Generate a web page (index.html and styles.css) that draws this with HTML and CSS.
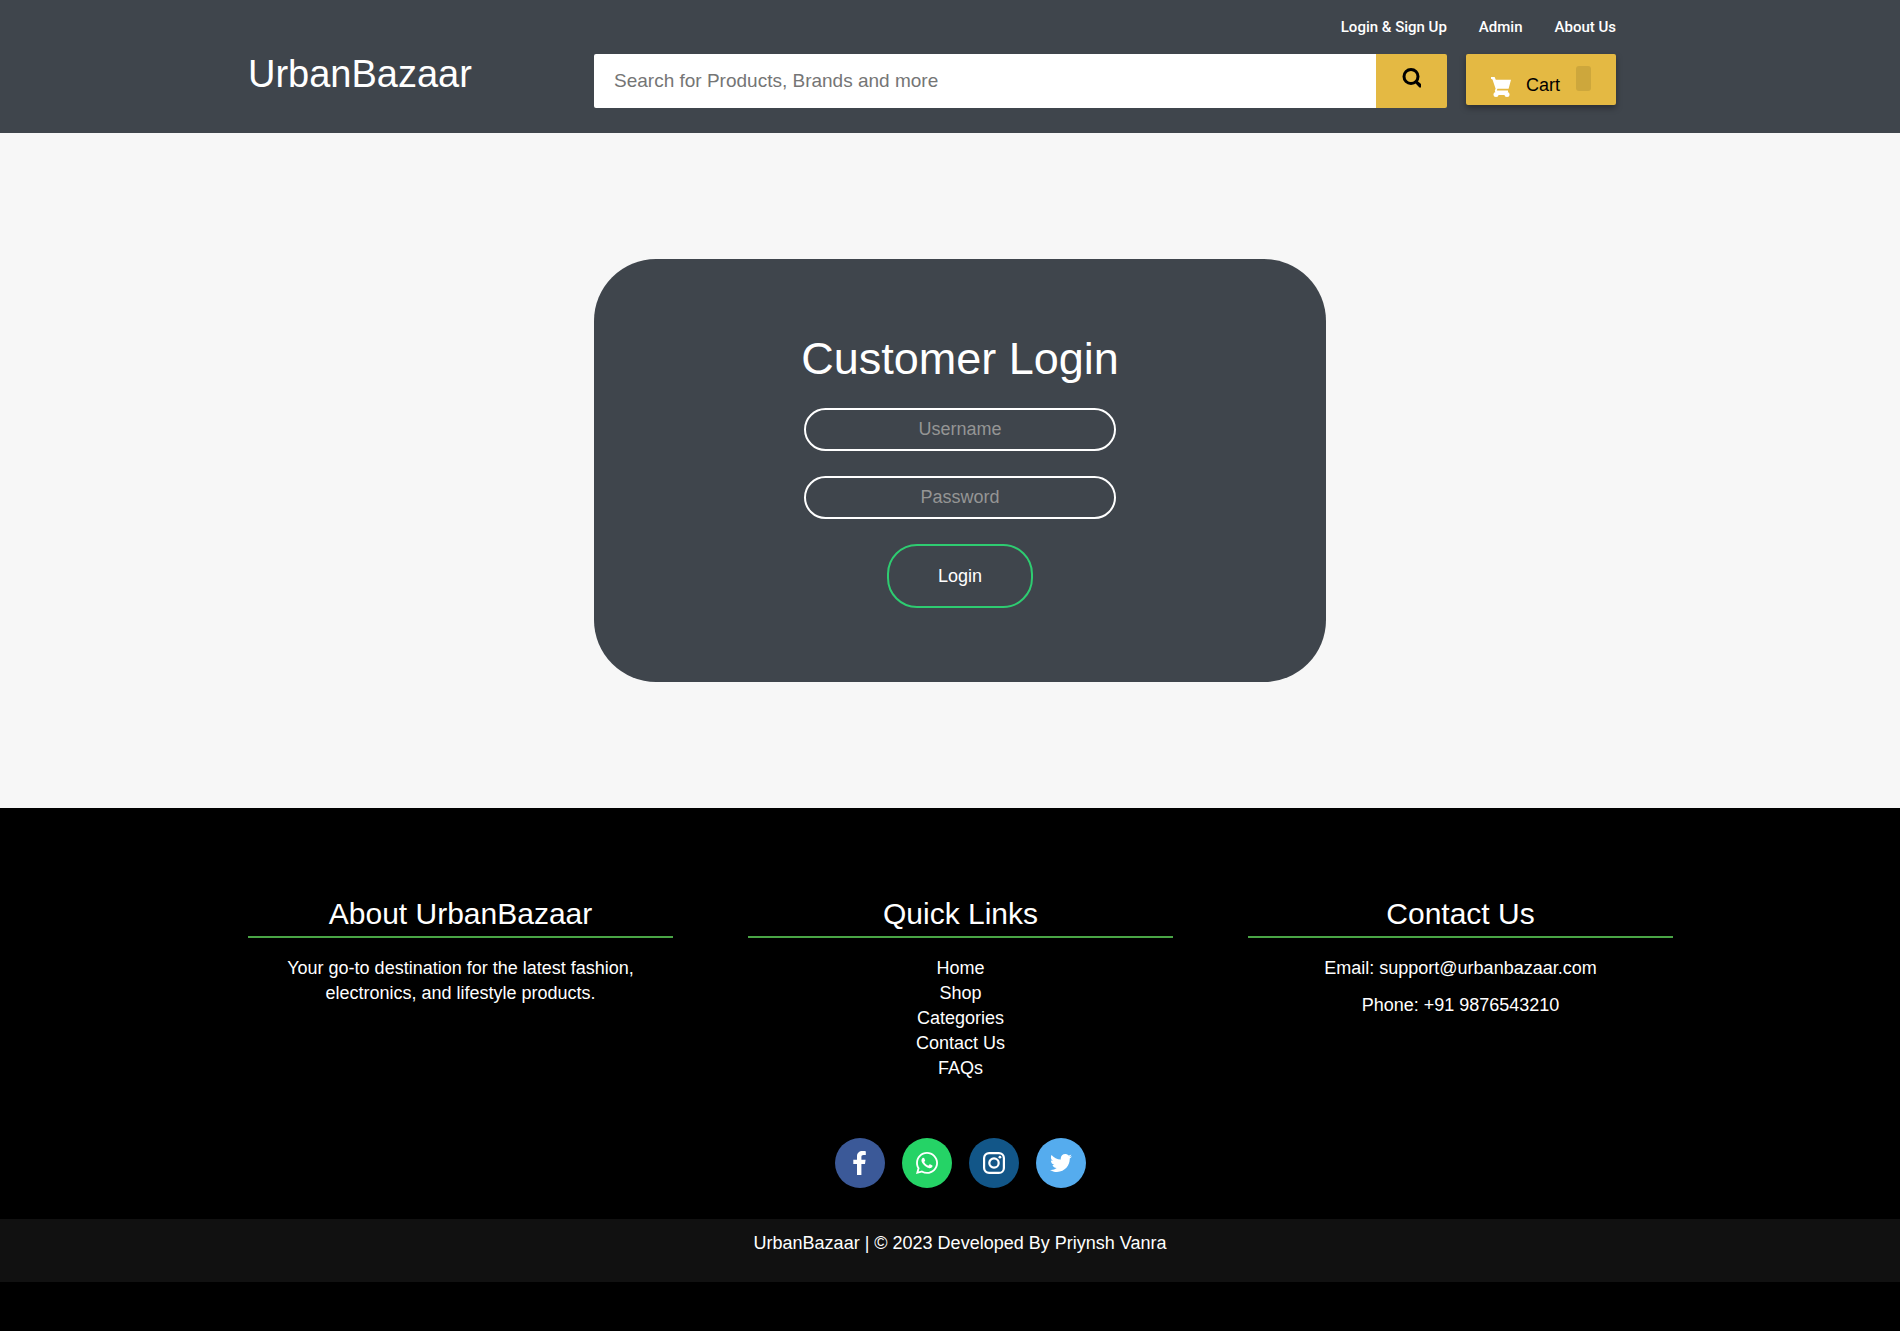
FILE: index.html
```html
<!DOCTYPE html>
<html lang="en">
<head>
<meta charset="utf-8">
<meta name="viewport" content="width=device-width, initial-scale=1">
<title>UrbanBazaar - Customer Login</title>
<link rel="stylesheet" href="styles.css">
</head>
<body>
<header class="site-header">
  <nav class="top-nav">
    <a href="#login">Login &amp; Sign Up</a>
    <a href="#admin">Admin</a>
    <a href="#about">About Us</a>
  </nav>
  <div class="header-main">
    <a class="logo" href="#">UrbanBazaar</a>
    <form class="search">
      <input class="search-input" type="search" aria-label="Search products" placeholder="Search for Products, Brands and more">
      <button class="search-button" type="submit" aria-label="Search">
        <svg width="19" height="20" viewBox="0 0 19 20"><circle cx="9" cy="8.500" r="7" fill="none" stroke="#000" stroke-width="3"/><path d="M12.500 14.200l2.200-2 4.300 3.900v3.300h-1.600z" fill="#000"/></svg>
      </button>
    </form>
    <button class="cart" type="button">
      <svg class="cart-icon" width="20" height="20" viewBox="0 0 20 20" fill="#fff"><path d="M0 0h3.600l1.200 2.800H20l-2.400 9H6.400l-.6 1.800H17v1.600H4.300L3.800 13.600l.8-1.800L1.500 2.600 0 1.800z"/><circle cx="5" cy="17.400" r="2.500"/><circle cx="16" cy="17.400" r="2.500"/><path d="M5 15h11v3H5z"/></svg>
      <span class="cart-label">Cart</span>
      <span class="cart-count"></span>
    </button>
  </div>
</header>

<main class="page">
  <form class="login-card">
    <h1 class="login-title">Customer Login</h1>
    <input class="field" type="text" aria-label="Username" placeholder="Username">
    <input class="field" type="password" aria-label="Password" placeholder="Password">
    <button class="login-button" type="submit">Login</button>
  </form>
</main>

<footer class="site-footer">
  <div class="footer-columns">
    <section>
      <h2 class="footer-title">About UrbanBazaar</h2>
      <p class="about-text">Your go-to destination for the latest fashion, electronics, and lifestyle products.</p>
    </section>
    <section>
      <h2 class="footer-title">Quick Links</h2>
      <ul class="links">
        <li><a href="#home">Home</a></li>
        <li><a href="#shop">Shop</a></li>
        <li><a href="#categories">Categories</a></li>
        <li><a href="#contact">Contact Us</a></li>
        <li><a href="#faqs">FAQs</a></li>
      </ul>
    </section>
    <section>
      <h2 class="footer-title">Contact Us</h2>
      <p class="contact-line">Email: support@urbanbazaar.com</p>
      <p class="contact-line">Phone: +91 9876543210</p>
    </section>
  </div>
  <div class="social">
    <a class="social-link facebook" href="#facebook" aria-label="Facebook">
      <svg width="13" height="24" viewBox="0 0 13 24" fill="#fff"><path d="M12.800.2v3.800h-2.300c-1.700 0-2.100.8-2.100 2v2.700h4.200L12 12.900H8.400V24H4V12.900H.3V8.700H4V5.500C4 1.900 6.200 0 9.500 0c1.500 0 2.900.1 3.300.2z"/></svg>
    </a>
    <a class="social-link whatsapp" href="#whatsapp" aria-label="WhatsApp">
      <svg width="22" height="22" viewBox="0 0 448 448" fill="#fff"><path d="M380.900 65.100C339 23.100 283.200 0 223.900 0 101.500 0 1.900 99.600 1.900 222c0 39.100 10.200 77.300 29.600 111L0 448l117.700-30.900c32.400 17.700 68.900 27 106.100 27h.1c122.300 0 224.100-99.600 224.100-222 0-59.300-25.200-115-67.100-157zM223.900 406.700c-33.200 0-65.700-8.900-94-25.700l-6.700-4-69.800 18.300L72 327.200l-4.400-7c-18.500-29.400-28.200-63.300-28.200-98.200 0-101.700 82.800-184.500 184.600-184.500 49.300 0 95.600 19.200 130.400 54.100 34.800 34.900 56.200 81.200 56.100 130.500 0 101.800-84.900 184.600-186.600 184.600zm101.200-138.200c-5.500-2.800-32.800-16.200-37.900-18-5.100-1.900-8.800-2.800-12.500 2.800-3.700 5.600-14.300 18-17.600 21.800-3.200 3.700-6.500 4.200-12 1.400-32.600-16.300-54-29.100-75.500-66-5.700-9.800 5.700-9.100 16.300-30.300 1.800-3.700.9-6.900-.5-9.700-1.400-2.800-12.500-30.100-17.100-41.200-4.500-10.800-9.100-9.300-12.500-9.500-3.200-.2-6.900-.2-10.600-.2-3.700 0-9.700 1.400-14.800 6.900-5.100 5.600-19.400 19-19.400 46.300 0 27.300 19.900 53.700 22.600 57.400 2.800 3.700 39.100 59.700 94.800 83.800 35.200 15.200 49 16.500 66.600 13.900 10.700-1.600 32.800-13.400 37.400-26.400 4.600-13 4.600-24.100 3.200-26.400-1.300-2.500-5-3.900-10.500-6.600z"/></svg>
    </a>
    <a class="social-link instagram" href="#instagram" aria-label="Instagram">
      <svg width="22" height="22" viewBox="0 0 22 22" fill="none" stroke="#fff" stroke-width="2.200"><rect x="1.100" y="1.100" width="19.800" height="19.800" rx="5"/><circle cx="11" cy="11" r="4.700"/><circle cx="16.900" cy="5.200" r="1.400" fill="#fff" stroke="none"/></svg>
    </a>
    <a class="social-link twitter" href="#twitter" aria-label="Twitter">
      <svg width="22" height="18" viewBox="0 48 512 416" fill="#fff"><path d="M459.370 151.716c.325 4.548.325 9.097.325 13.645 0 138.720-105.583 298.558-298.558 298.558-59.452 0-114.680-17.219-161.137-47.106 8.447.974 16.568 1.299 25.340 1.299 49.055 0 94.213-16.568 130.274-44.832-46.132-.975-84.792-31.188-98.112-72.772 6.498.974 12.995 1.624 19.818 1.624 9.421 0 18.843-1.300 27.614-3.573-48.081-9.747-84.143-51.980-84.143-102.985v-1.299c13.969 7.797 30.214 12.670 47.431 13.319-28.264-18.843-46.781-51.005-46.781-87.391 0-19.492 5.197-37.360 14.294-52.954 51.655 63.675 129.300 105.258 216.365 109.807-1.624-7.797-2.599-15.918-2.599-24.040 0-57.828 46.782-104.934 104.934-104.934 30.213 0 57.502 12.670 76.670 33.137 23.715-4.548 46.456-13.320 66.599-25.340-7.798 24.366-24.366 44.833-46.132 57.827 21.117-2.273 41.584-8.122 60.426-16.243-14.292 20.791-32.161 39.308-52.628 54.253z"/></svg>
    </a>
  </div>
  <p class="copyright">UrbanBazaar | © 2023 Developed By Priynsh Vanra</p>
</footer>
</body>
</html>
```
FILE: styles.css
```css
* { box-sizing: border-box; }

body {
  margin: 0;
  min-height: 100vh;
  display: flex;
  flex-direction: column;
  background: #f7f7f7;
  color: #fff;
  font: 18px/25px "Liberation Sans", Arial, sans-serif;
}

h1, h2, p, ul { margin: 0; padding: 0; font-weight: 400; }
ul { list-style: none; }
a { color: inherit; text-decoration: none; }
button, input { font: inherit; border: 0; }
button { cursor: pointer; }
svg { display: block; }

/* Header */
.site-header {
  padding: 15px 284px 25px 248px;
  background: #3f454c;
}

.top-nav {
  display: flex;
  justify-content: flex-end;
  gap: 32px;
  margin-bottom: 14px;
  font: 500 15px/25px Roboto, sans-serif;
}

.header-main {
  display: flex;
  align-items: flex-start;
}

.logo {
  width: 346px;
  font-size: 38px;
  line-height: 40px;
}

.search {
  flex: 1;
  display: flex;
  height: 54px;
  margin-right: 19px;
}

.search-input {
  flex: 1;
  min-width: 0;
  padding: 0 20px 2px;
  border-radius: 2px 0 0 2px;
  background: #fff;
  font-size: 19px;
  appearance: none;
}

.search-input::placeholder { color: #757575; }

.search-button {
  width: 71px;
  padding: 14px 26px 20px;
  border-radius: 0 2px 2px 0;
  background: #e4b943;
}

.cart {
  display: flex;
  align-items: flex-start;
  width: 150px;
  height: 51px;
  padding: 12px 25px;
  border-radius: 2px;
  background: #e4b943;
  color: #000;
  box-shadow: 0 3px 6px rgba(0, 0, 0, .35);
}

.cart-icon { margin-top: 11px; }
.cart-label { margin: 7px 16px 0 15px; }

.cart-count {
  width: 15px;
  height: 25px;
  border-radius: 3px;
  background: #cda73c;
}

/* Login */
.page {
  display: flex;
  justify-content: center;
  padding: 126px 228px 126px 248px;
}

.login-card {
  display: flex;
  flex-direction: column;
  align-items: center;
  gap: 25px;
  width: 732px;
  padding: 75px 75px 74px;
  border-radius: 62px;
  background: #3f454c;
}

.login-title {
  font-size: 45px;
  line-height: 49px;
}

.field {
  width: 312px;
  height: 43px;
  padding: 0 12px;
  border: 2px solid #fff;
  border-radius: 24px;
  background: none;
  color: #fff;
  text-align: center;
}

.field::placeholder { color: #959595; }

.login-button {
  width: 146px;
  height: 64px;
  border: 2px solid #2ecc71;
  border-radius: 30px;
  background: none;
  color: #fff;
}

/* Footer */
.site-footer {
  flex: 1;
  padding-top: 88px;
  background: #000;
}

.footer-columns {
  display: grid;
  grid-template-columns: repeat(3, 1fr);
  gap: 75px;
  padding: 0 227px 0 248px;
  text-align: center;
}

.footer-title {
  margin-bottom: 18px;
  padding-bottom: 4px;
  border-bottom: 2px solid #4aa546;
  font-size: 30px;
  line-height: 36px;
}

.about-text { padding: 0 38px; }
.contact-line { margin-bottom: 12px; }

.social {
  display: flex;
  justify-content: center;
  gap: 17px;
  padding: 57px 228px 31px 248px;
}

.social-link {
  display: grid;
  place-items: center;
  width: 50px;
  height: 50px;
  border-radius: 50%;
}

.facebook { background: #3b5998; }
.whatsapp { background: #25d366; }
.instagram { background: #125688; }
.twitter { background: #55acee; }

.copyright {
  padding: 12px 228px 26px 248px;
  background: #111;
  text-align: center;
}
```
